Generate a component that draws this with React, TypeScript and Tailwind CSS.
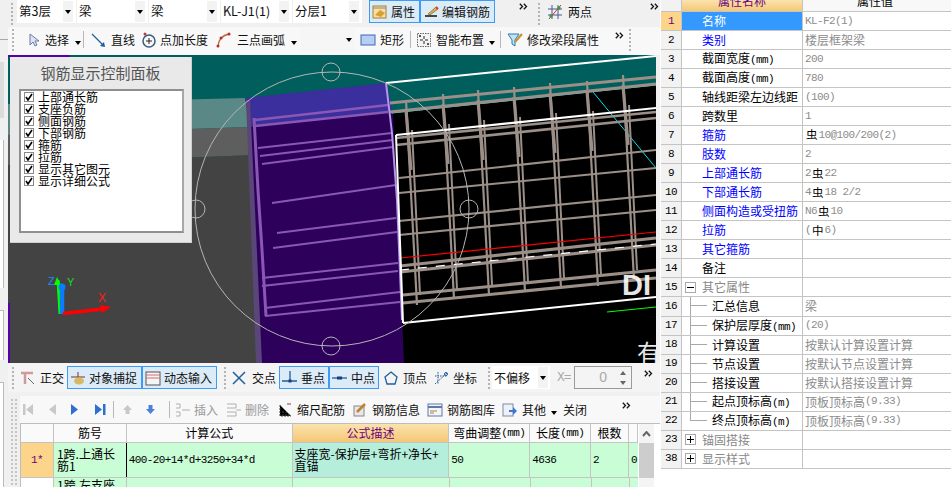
import React from "react";

const CJK = "font-['Noto_Sans_CJK_SC','Liberation_Sans',sans-serif]";
const MONO = "font-['Liberation_Mono','Noto_Sans_CJK_SC',monospace] text-[11px] tracking-[-0.6px]";

const Arrow = () => <span className="inline-block w-0 h-0 border-x-[3.5px] border-x-transparent border-t-[4px] border-t-black" />;
const More = () => (
  <svg width="9" height="7" viewBox="0 0 9 7" fill="none" className="block">
    <path d="M0.800 0.800 L3.500 3.500 L0.800 6.200 M4.800 0.800 L7.500 3.500 L4.800 6.200" stroke="#111" strokeWidth="1.300" />
  </svg>
);
const Grip = () => (
  <span className="flex flex-col gap-[2px] w-[3px] shrink-0">
    {[0, 1, 2, 3, 4, 5].map((i) => <span key={i} className="w-[2px] h-[2px] bg-[#b4b4b4]" />)}
  </span>
);
const Sep = () => <span className="w-px h-[17px] bg-[#b8b8b8] shrink-0" />;

function Ico({ children }: { children: React.ReactNode }) {
  return <svg width="16" height="16" viewBox="0 0 16 16" fill="none" className="shrink-0">{children}</svg>;
}

const Tool = ({ w, icon, label, gap = 4, gray = false, arrow = false }: { w: number; icon?: React.ReactNode; label?: string; gap?: number; gray?: boolean; arrow?: boolean }) => (
  <div className="flex items-center shrink-0 h-full" style={{ width: w, gap }}>
    {icon}
    {label && <span className={`whitespace-nowrap ${gray ? "text-[#999]" : "text-[#111]"}`}>{label}</span>}
    {arrow && <span className="ml-[1px]"><Arrow /></span>}
  </div>
);

const OnBtn = ({ w, icon, label }: { w: number; icon: React.ReactNode; label: string }) => (
  <div className="flex items-center gap-[3px] h-[23px] px-[2px] border border-[#3b9bf5] bg-[#dcebf8] shrink-0" style={{ width: w }}>
    {icon}
    <span className="whitespace-nowrap text-[#111]">{label}</span>
  </div>
);

const Drop = ({ w, label }: { w: number; label: string }) => (
  <div className="flex items-center justify-between h-[23px] bg-white pl-[2px] pr-[3px] shrink-0" style={{ width: w }}>
    <span className="whitespace-nowrap text-[#111] text-[12.5px]">{label}</span>
    <span className="w-[10px] h-[21px] bg-[#f3f3f3] flex items-center justify-center"><Arrow /></span>
  </div>
);

function Viewport() {
  const hLines: [number, number, number, number, number][] = [
    [390, 103, 656, 77, 3], [390, 112, 656, 84, 3], [396, 138, 656, 112, 2.600], [396, 145, 656, 118, 2.600],
    [399, 178, 656, 150, 2], [399, 193, 656, 168, 2], [399, 221, 656, 195, 2.200], [399, 235, 656, 210, 2.200],
    [400, 266, 656, 238, 3.200], [400, 272, 656, 245, 3.200], [403, 295, 656, 270, 3], [403, 303, 656, 278, 3],
  ];
  const tops = [[406, 100], [443, 94], [478, 90], [514, 87], [550, 83], [587, 81], [623, 75]];
  const purple: [number, number, number, number, number][] = [
    [255, 120, 388, 105, 2.500], [255, 126, 388, 112, 2.500], [258, 148, 392, 133, 2], [260, 156, 393, 140, 2], [262, 164, 393, 147, 1.800],
    [272, 203, 396, 185, 1.800], [277, 233, 396, 218, 1.800], [273, 248, 397, 232, 1.800], [262, 278, 398, 263, 2], [262, 286, 398, 271, 2],
    [265, 308, 400, 292, 2], [265, 316, 400, 302, 2],
  ];
  return (
    <svg width="648" height="308" viewBox="8 55 648 308" className="block">
      <rect x="8" y="55" width="648" height="308" fill="#005f5c" />
      <polygon points="8,104 245,98 250,127 8,135" fill="#5a8886" />
      <polygon points="8,135 250,127 254,155 8,165" fill="#5e5e5e" />
      <polygon points="8,165 254,155 262,363 8,363" fill="#434343" />
      <polygon points="392,113 656,85 656,363 392,363" fill="#000" />
      <polygon points="245,98 386,83 393,112 250,127" fill="#3b2e9d" />
      <polygon points="250,127 393,112 404,363 258,363" fill="#2d005c" />
      <polygon points="246,100 250,100 262,363 256,363" fill="#5a4678" />
      <rect x="8" y="55" width="62" height="2" fill="#5500aa" />
      <rect x="8" y="303" width="2" height="60" fill="#5500aa" />
      {purple.map((l, i) => <line key={i} x1={l[0]} y1={l[1]} x2={l[2]} y2={l[3]} stroke="#8a58b4" strokeWidth={l[4]} />)}
      <polyline points="254,118 258,190 262,250 266,316" stroke="#8a58b4" strokeWidth="3" fill="none" />
      <polyline points="386,83 392,133 397,200 402,320" stroke="#b596ea" strokeWidth="2" fill="none" />
      <line x1="392" y1="113" x2="656" y2="85" stroke="#00e5ee" strokeWidth="1" />
      <line x1="593" y1="92" x2="656" y2="168" stroke="#00e5ee" strokeWidth="1" />
      {tops.map(([x, y], i) => (
        <g key={i} stroke="#9b8f88" fill="none">
          <line x1={x} y1={y} x2={x + 11} y2={y + 205} strokeWidth="2.200" />
          <line x1={x + 6} y1={y + 30} x2={x + 14} y2={y + 195} strokeWidth="2" />
          <line x1={x} y1={y + 10} x2={x + 5} y2={y + 70} strokeWidth="3.200" />
        </g>
      ))}
      {hLines.map((l, i) => <line key={i} x1={l[0]} y1={l[1]} x2={l[2]} y2={l[3]} stroke="#9b8f88" strokeWidth={l[4]} />)}
      <line x1="400" y1="258" x2="656" y2="232" stroke="#ff0000" strokeWidth="1.200" />
      <line x1="400" y1="270" x2="656" y2="244" stroke="#fff" strokeWidth="1.200" strokeDasharray="9 9" />
      <line x1="607" y1="312" x2="656" y2="307" stroke="#00ff00" strokeWidth="1.200" />
      <line x1="386" y1="83" x2="656" y2="56" stroke="#fff" strokeWidth="2" />
      <line x1="396" y1="135" x2="656" y2="108" stroke="#fff" strokeWidth="2.200" />
      <line x1="396" y1="135" x2="403" y2="323" stroke="#fff" strokeWidth="2" />
      <line x1="403" y1="323" x2="656" y2="297" stroke="#fff" strokeWidth="2" />
      <g stroke="#b5b5b5" fill="none" strokeWidth="1">
        <circle cx="332" cy="209" r="137" />
        <circle cx="331" cy="72" r="9" />
        <circle cx="196" cy="209" r="9" />
        <circle cx="331" cy="346" r="9" />
        <circle cx="469" cy="209" r="9" />
      </g>
      <text x="622" y="295" fill="#fff" fontSize="29" fontWeight="700" fontFamily="Liberation Sans" opacity="0.9">DI</text>
      <text x="637" y="362" fill="#fff" fontSize="24" fontFamily="Noto Sans CJK SC" opacity="0.9">有</text>
      <line x1="60" y1="314" x2="58" y2="280" stroke="#00ff00" strokeWidth="3" />
      <polygon points="57,277 54,285 61,285" fill="#00ff00" />
      <line x1="62" y1="314" x2="62" y2="288" stroke="#0a7cff" strokeWidth="4.500" />
      <circle cx="62" cy="287" r="3.500" fill="#0a7cff" />
      <line x1="63" y1="313.500" x2="103" y2="309" stroke="#ff0000" strokeWidth="3.500" />
      <polygon points="100,305 111,307 102,313" fill="#ff0000" />
      <text x="48" y="285" fill="#1e88ff" fontSize="11" fontFamily="Liberation Sans">Z</text>
      <text x="67" y="286" fill="#1fdc1f" fontSize="11" fontFamily="Liberation Sans">Y</text>
      <text x="98" y="302" fill="#ff1a1a" fontSize="12" fontFamily="Liberation Sans">X</text>
    </svg>
  );
}

const panelItems = ["上部通长筋", "支座负筋", "侧面钢筋", "下部钢筋", "箍筋", "拉筋", "显示其它图元", "显示详细公式"];

const ControlPanel = () => (
  <div className="absolute left-[2px] top-[2px] w-[182px] h-[186px] bg-[#e9e9e9] border-r border-b border-[#cfcfcf] px-[9px] flex flex-col">
    <div className="h-[32px] flex items-center justify-center text-[15px] text-[#555] shrink-0">钢筋显示控制面板</div>
    <div className="w-[165px] h-[144px] bg-white border-2 border-[#8f8f8f] border-r-[#a8a8a8] pl-[3px]">
      {panelItems.map((t) => (
        <div key={t} className="flex items-center gap-[4px] h-[12px] text-[12px] leading-[12px] text-black whitespace-nowrap">
          <span className="w-[10px] h-[10px] border border-[#8a8a8a] bg-white flex items-center justify-center shrink-0">
            <svg width="8" height="8" viewBox="0 0 8 8"><path d="M1 4 L3 7 L7 1" stroke="#000" strokeWidth="1.600" fill="none" /></svg>
          </span>
          <span>{t}</span>
        </div>
      ))}
    </div>
  </div>
);

type Row = { n: string; name: string; color?: string; value?: React.ReactNode; kind?: "child" | "last" | "open" | "closed"; sel?: boolean };

const Lat = ({ children }: { children: React.ReactNode }) => <span className={MONO}>{children}</span>;
const Bar = ({ c = "虫" }: { c?: string }) => <span className="text-black text-[11.5px] mx-[1px]">{c}</span>;

const rows: Row[] = [
  { n: "1", name: "名称", sel: true, value: <Lat>KL-F2(1)</Lat> },
  { n: "2", name: "类别", color: "text-[#0000ff]", value: "楼层框架梁" },
  { n: "3", name: "截面宽度(mm)", value: <Lat>200</Lat> },
  { n: "4", name: "截面高度(mm)", value: <Lat>780</Lat> },
  { n: "5", name: "轴线距梁左边线距", value: <Lat>(100)</Lat> },
  { n: "6", name: "跨数里", value: <Lat>1</Lat> },
  { n: "7", name: "箍筋", color: "text-[#0000ff]", value: <><Bar /><Lat>10@100/200(2)</Lat></> },
  { n: "8", name: "肢数", color: "text-[#0000ff]", value: <Lat>2</Lat> },
  { n: "9", name: "上部通长筋", color: "text-[#0000ff]", value: <><Lat>2</Lat><Bar /><Lat>22</Lat></> },
  { n: "10", name: "下部通长筋", color: "text-[#0000ff]", value: <><Lat>4</Lat><Bar /><Lat>18 2/2</Lat></> },
  { n: "11", name: "侧面构造或受扭筋", color: "text-[#0000ff]", value: <><Lat>N6</Lat><Bar /><Lat>10</Lat></> },
  { n: "12", name: "拉筋", color: "text-[#0000ff]", value: <><Lat>(</Lat><Bar c="中" /><Lat>6)</Lat></> },
  { n: "13", name: "其它箍筋", color: "text-[#0000ff]" },
  { n: "14", name: "备注" },
  { n: "15", name: "其它属性", kind: "open" },
  { n: "16", name: "汇总信息", kind: "child", value: "梁" },
  { n: "17", name: "保护层厚度(mm)", kind: "child", value: <Lat>(20)</Lat> },
  { n: "18", name: "计算设置", kind: "child", value: "按默认计算设置计算" },
  { n: "19", name: "节点设置", kind: "child", value: "按默认节点设置计算" },
  { n: "20", name: "搭接设置", kind: "child", value: "按默认搭接设置计算" },
  { n: "21", name: "起点顶标高(m)", kind: "child", value: <>顶板顶标高<Lat>(9.33)</Lat></> },
  { n: "22", name: "终点顶标高(m)", kind: "last", value: <>顶板顶标高<Lat>(9.33)</Lat></> },
  { n: "23", name: "锚固搭接", kind: "closed" },
  { n: "38", name: "显示样式", kind: "closed" },
];

const NameText = ({ t }: { t: string }) => {
  const m = t.match(/^(.*)\((mm|m)\)$/);
  if (!m) return <>{t}</>;
  return <>{m[1]}<Lat>({m[2]})</Lat></>;
};

const Expander = ({ sign }: { sign: "+" | "-" }) => (
  <span className="w-[11px] h-[11px] border border-[#a8a8a8] bg-white flex items-center justify-center ml-[3px] mr-[6px] shrink-0">
    <span className="relative w-[7px] h-px bg-black">
      {sign === "+" && <span className="absolute left-[3px] top-[-3px] w-px h-[7px] bg-black" />}
    </span>
  </span>
);

const PropRow = ({ r }: { r: Row }) => {
  const child = r.kind === "child" || r.kind === "last";
  return (
    <div className="flex h-[19.040px] border-b border-[#c4c4c4] text-[12px] leading-none shrink-0">
      <div className={`w-[21px] shrink-0 border-r border-[#c4c4c4] flex items-center justify-center ${MONO} ${r.sel ? "bg-[#fdd58a] text-[#6a0080]" : "bg-[#f2f2f2] text-black"}`}>{r.n}</div>
      <div className={`w-[121px] shrink-0 border-r border-[#c4c4c4] flex items-center whitespace-nowrap ${r.sel ? "bg-[#3399ff] text-white" : r.color ?? "text-black"} ${r.kind === "open" || r.kind === "closed" ? "" : child ? "pl-[8px]" : "pl-[20px]"}`}>
        {r.kind === "open" && <Expander sign="-" />}
        {r.kind === "closed" && <Expander sign="+" />}
        {child && (
          <span className="w-[22px] shrink-0 flex flex-col self-stretch">
            <span className="h-1/2 w-[17px] border-l border-b border-[#a8a8a8]" />
            <span className={`h-1/2 w-[17px] ${r.kind === "child" ? "border-l border-[#a8a8a8]" : ""}`} />
          </span>
        )}
        <span className={r.kind === "open" || r.kind === "closed" ? "text-[#888]" : ""}><NameText t={r.name} /></span>
      </div>
      <div className="flex-1 flex items-center pl-[2px] text-[#8c8c8c] whitespace-nowrap">{r.value}</div>
    </div>
  );
};

const RightPanel = () => (
  <div className="w-[291px] shrink-0 h-full bg-white flex flex-col pl-[1px]">
    <div className="flex h-[12px] overflow-hidden border-b border-[#c4c4c4] text-[12px] shrink-0">
      <div className="w-[21px] bg-[#f2f2f2] border-r border-[#c4c4c4]" />
      <div className="w-[121px] bg-gradient-to-b from-[#fbe3ad] to-[#f5c776] border-r border-[#c4c4c4] overflow-hidden">
        <div className="h-[18px] -mt-[8px] flex items-center justify-center text-[#6a0080]">属性名称</div>
      </div>
      <div className="flex-1 bg-[#f8f8f8] overflow-hidden">
        <div className="h-[18px] -mt-[8px] flex items-center justify-center text-black pr-[4px]">属性值</div>
      </div>
    </div>
    {rows.map((r) => <PropRow key={r.n} r={r} />)}
  </div>
);

const cols = [
  { t: "筋号", w: 73 }, { t: "计算公式", w: 166 }, { t: "公式描述", w: 157, hi: true },
  { t: "弯曲调整(mm)", w: 81 }, { t: "长度(mm)", w: 61 }, { t: "根数", w: 38 }, { t: "", w: 9 },
];

const BarTable = () => (
  <div className="flex-1 flex bg-white border-t border-[#bdbdbd] border-l text-[12px] leading-[12px] overflow-hidden">
    <div className="w-[617px] shrink-0 flex flex-col">
      <div className="flex h-[19px] shrink-0 border-b border-[#c4c4c4]">
        <div className="w-[33px] border-r border-[#c4c4c4] bg-[#fafafa]" />
        {cols.map((c, i) => (
          <div key={i} className={`flex items-center justify-center border-r border-[#c4c4c4] whitespace-nowrap ${c.hi ? "bg-gradient-to-b from-[#fbe3ad] to-[#f5c776] text-[#6a0080]" : "bg-[#fafafa] text-black"}`} style={{ width: c.w }}>
            <NameText t={c.t} />
          </div>
        ))}
      </div>
      <div className="flex h-[35px] shrink-0 border-b border-[#c4c4c4] bg-[#c8fdd6] text-black">
        <div className={`w-[33px] bg-[#fdd58a] border-r border-[#c4c4c4] flex items-center justify-center text-[#6a0080] ${MONO}`}>1*</div>
        <div className="w-[73px] border-r border-black px-[3px] pt-[5px]">1跨.上通长筋1</div>
        <div className={`w-[166px] border-r border-[#c4c4c4] flex items-center pl-[2px] ${MONO}`}>400-20+14*d+3250+34*d</div>
        <div className="w-[157px] border-r border-[#c4c4c4] bg-[#b5efdc] pl-[2px] pt-[5px] whitespace-nowrap">支座宽-保护层+弯折+净长+<br />直锚</div>
        <div className={`w-[81px] border-r border-[#c4c4c4] flex items-center pl-[2px] ${MONO}`}>50</div>
        <div className={`w-[61px] border-r border-[#c4c4c4] flex items-center pl-[2px] ${MONO}`}>4636</div>
        <div className={`w-[38px] border-r border-[#c4c4c4] flex items-center pl-[2px] ${MONO}`}>2</div>
        <div className={`w-[9px] flex items-center pl-[2px] ${MONO}`}>0</div>
      </div>
      <div className="flex h-[20px] shrink-0 bg-[#c8fdd6] text-black">
        <div className="w-[33px] bg-white border-r border-[#c4c4c4]" />
        <div className="w-[73px] border-r border-[#c4c4c4] px-[3px] pt-[1px] whitespace-nowrap overflow-hidden">1跨.左支座</div>
        <div className="w-[166px] border-r border-[#c4c4c4]" />
        <div className="w-[157px] border-r border-[#c4c4c4]" />
        <div className="w-[81px] border-r border-[#c4c4c4]" />
        <div className="w-[61px] border-r border-[#c4c4c4]" />
        <div className="w-[38px] border-r border-[#c4c4c4]" />
      </div>
    </div>
    <div className="w-[15px] shrink-0 bg-[#f4f4f4] flex flex-col ml-[1px]">
      <div className="h-[19px] flex items-center justify-center">
        <svg width="9" height="6" viewBox="0 0 9 6"><path d="M1 5 L4.500 1 L8 5" stroke="#666" strokeWidth="2" fill="none" /></svg>
      </div>
      <div className="h-[35px] bg-[#cdcdcd]" />
    </div>
  </div>
);

export default function App() {
  return (
    <div className={`w-[951px] h-[487px] overflow-hidden flex bg-[#f0f0f0] text-[12px] ${CJK}`}>
      <div className="w-[8px] shrink-0 flex flex-col pt-[39px] gap-[22px]">
        <div className="h-[1px] bg-[#a8a8a8]" />
        <div className="h-[56px] w-[4px] bg-[#dcdcdc]" />
        <div className="h-[148px] w-[4px] bg-white border-r border-[#bbb]" />
        <div className="h-[50px] w-[4px] bg-white border-r border-t border-[#bbb]" />
        <div className="flex-1 w-[4px] bg-white border-r border-t border-[#bbb]" />
      </div>

      <div className="w-[652px] shrink-0 flex flex-col">
        <div className="h-[27px] flex items-start shrink-0">
          <div className="w-[9px] flex justify-center pt-[3px]"><Grip /></div>
          <div className="flex gap-[1px] items-center">
            <Drop w={59} label="第3层" />
            <Drop w={71} label="梁" />
            <Drop w={71} label="梁" />
            <Drop w={71} label="KL-J1(1)" />
            <Drop w={69} label="分层1" />
          </div>
          <div className="ml-[4px] pt-[3px]"><Sep /></div>
          <div className="ml-[3px]">
            <OnBtn w={51} label="属性" icon={<Ico><rect x="1" y="2" width="13" height="12" fill="#f9dfa0" stroke="#a08040" /><path d="M3 11 L8 6 L13 9 L9 13 Z" fill="#d8a030" /><path d="M1 4 H14" stroke="#888" /></Ico>} />
          </div>
          <OnBtn w={75} label="编辑钢筋" icon={<Ico><path d="M2 12 H14" stroke="#111" strokeWidth="1.500" /><path d="M5 10 L13 3 L15 5 L7 11 Z" fill="#d8b050" stroke="#705010" strokeWidth="0.600" /><path d="M13 3 L15 5" stroke="#d04040" strokeWidth="2" /></Ico>} />
          <div className="w-[33px] flex justify-end pt-[3px] shrink-0"><More /></div>
          <div className="ml-[10px] pt-[3px]"><Grip /></div>
          <div className="ml-[6px] h-[23px]">
            <Tool w={103} gap={5} label="两点" icon={<Ico><path d="M5 1 V15 M11 1 V15 M1 5 H15 M1 11 H15" stroke="#4a5a90" /><path d="M2 15 L14 1" stroke="#d03030" /><circle cx="4" cy="12" r="1.700" fill="#3c9a3c" /><circle cx="12" cy="4" r="1.700" fill="#3c9a3c" /></Ico>} />
          </div>
          <div className="pt-[3px]"><More /></div>
        </div>

        <div className="h-[28px] pb-[3px] flex items-center shrink-0 bg-[#f8f8f8] rounded-t-[3px]">
          <div className="w-[18px] pl-[4px]"><Grip /></div>
          <Tool w={57} gap={5} label="选择" arrow icon={<svg width="12" height="14" viewBox="0 0 12 14" className="shrink-0 ml-[2px]"><path d="M2 1 V12 L5 9 L7 13 L9 12 L7 8 H11 Z" fill="#dfe4f5" stroke="#6b7aa8" /></svg>} />
          <Sep />
          <div className="ml-[7px] h-full"><Tool w={50} gap={4} label="直线" icon={<Ico><path d="M1 2 L13 14" stroke="#1f5f9f" strokeWidth="1.300" /><path d="M14 15 L9 14 L13 10 Z" fill="#1f5f9f" /></Ico>} /></div>
          <Tool w={75} gap={3} label="点加长度" icon={<Ico><circle cx="8" cy="9" r="6" stroke="#3a5a80" strokeWidth="1.500" /><path d="M5 9 H11 M8 6 V12" stroke="#222" /><circle cx="4" cy="2" r="1.500" fill="#b04040" /></Ico>} />
          <Tool w={84} gap={5} label="三点画弧" arrow icon={<Ico><path d="M2 14 Q3 4 13 2" stroke="#c06030" strokeWidth="1.300" /><circle cx="2" cy="14" r="1.500" fill="#b03030" /><circle cx="5" cy="6" r="1.500" fill="#b03030" /><circle cx="13" cy="2" r="1.500" fill="#b03030" /></Ico>} />
          <div className="w-[55px] h-[24px] bg-[#f6f6f6] flex items-center justify-end pr-[3px]"><Arrow /></div>
          <div className="ml-[5px] h-full"><Tool w={50} gap={4} label="矩形" icon={<Ico><rect x="1" y="3" width="14" height="10" fill="#b7cdf2" stroke="#3e68b8" /></Ico>} /></div>
          <Sep />
          <div className="ml-[5px] h-full"><Tool w={84} gap={4} label="智能布置" arrow icon={<Ico><rect x="1.500" y="1.500" width="13" height="13" fill="#f4f4f4" stroke="#666" strokeDasharray="1.500 1" /><path d="M8 4 V7 M8 9 V12 M4 8 H7 M9 8 H12" stroke="#222" /><circle cx="4" cy="4" r="1" fill="#222" /><circle cx="12" cy="12" r="1" fill="#222" /></Ico>} /></div>
          <Sep />
          <div className="ml-[6px] h-full"><Tool w={108} gap={4} label="修改梁段属性" icon={<Ico><path d="M1 2 H12 L8 8 V14 L5 12 V8 Z" fill="#bfe4f5" stroke="#2a7ab0" /><path d="M8 10 L15 2" stroke="#c89030" strokeWidth="2" /></Ico>} /></div>
          <div className="pb-[8px]"><More /></div>
          <div className="ml-[5px]"><Grip /></div>
        </div>

        <div className="relative h-[308px] shrink-0 overflow-hidden">
          <Viewport />
          <ControlPanel />
        </div>

        <div className="h-[29px] flex items-center shrink-0 bg-[#f4f4f4]">
          <div className="w-[12px] pl-[4px]"><Grip /></div>
          <Tool w={47} gap={4} label="正交" icon={<Ico><path d="M1 3 H13 M5 3 V14" stroke="#d09a9a" strokeWidth="2.500" /><path d="M8 8 L14 14" stroke="#667" /></Ico>} />
          <OnBtn w={75} label="对象捕捉" icon={<Ico><path d="M1 7 H15 M8 2 V7" stroke="#803020" /><ellipse cx="9" cy="11" rx="5" ry="3.500" fill="#d8b860" /></Ico>} />
          <OnBtn w={75} label="动态输入" icon={<Ico><rect x="1" y="2" width="14" height="13" fill="#f5f5f5" stroke="#555" /><path d="M1 5 H15 M1 8 H15" stroke="#d07070" /></Ico>} />
          <div className="ml-[7px] w-[7px]"><Grip /></div>
          <Tool w={48} gap={5} label="交点" icon={<Ico><path d="M2 2 L14 14 M14 2 L2 14" stroke="#1f5f9f" strokeWidth="1.500" /></Ico>} />
          <OnBtn w={50} label="垂点" icon={<Ico><path d="M0 11 H15 M8 1 V11" stroke="#1f5f9f" strokeWidth="1.300" /><rect x="6.500" y="9.500" width="3" height="3" fill="#143f80" /></Ico>} />
          <OnBtn w={50} label="中点" icon={<Ico><path d="M0 8 H15" stroke="#1f5f9f" strokeWidth="1.300" /><rect x="5" y="6.500" width="5" height="3" fill="#143f80" /></Ico>} />
          <div className="ml-[4px] h-full"><Tool w={50} gap={4} label="顶点" icon={<Ico><path d="M8 2 L14 7 L12 14 H4 L2 7 Z" stroke="#1f5f9f" strokeWidth="1.300" /></Ico>} /></div>
          <Tool w={50} gap={4} label="坐标" icon={<Ico><path d="M2 14 L14 3 M2 6 H14 M5 2 V14" stroke="#2a5a9a" strokeDasharray="1.500 1" /><circle cx="13" cy="4" r="1.500" stroke="#1f5f9f" /></Ico>} />
          <div className="ml-[5px] w-[4px]"><Grip /></div>
          <div className="flex items-center justify-between h-[23px] w-[58px] bg-white pl-[2px] pr-[2px]">
            <span className="text-[12px] text-[#111]">不偏移</span>
            <span className="w-[10px] h-[21px] bg-[#f3f3f3] flex items-center justify-center"><Arrow /></span>
          </div>
          <div className="ml-[5px]"><Sep /></div>
          <span className="font-['Liberation_Mono',monospace] ml-[2px] text-[13px] text-[#aaa] w-[17px] tracking-[-1px]">X=</span>
          <div className="w-[58px] h-[23px] border border-[#9a9a9a] bg-[#f4f4f4] flex items-center justify-end">
            <span className="text-[14px] text-[#aaa] font-['Liberation_Sans',sans-serif] mr-[8px]">0</span>
            <span className="flex flex-col gap-[6px] items-center w-[16px]">
              <span className="w-0 h-0 border-x-[3.5px] border-x-transparent border-b-[4px] border-b-[#666]" />
              <span className="w-0 h-0 border-x-[3.5px] border-x-transparent border-t-[4px] border-t-[#666]" />
            </span>
          </div>
          <div className="ml-[12px] pb-[8px]"><More /></div>
        </div>

        <div className="flex-1 flex min-h-0">
          <div className="w-[12px] shrink-0 flex flex-col items-center pt-[5px] gap-[2px] overflow-hidden">
            <svg width="10" height="10" viewBox="0 0 10 10"><rect x="0.500" y="0.500" width="9" height="9" fill="#f2dede" stroke="#666" /><path d="M1 1 L9 9 M9 1 L1 9" stroke="#b04040" strokeWidth="1.200" /></svg>
            <div className="grid grid-cols-2 gap-[2px]">
              {Array.from({ length: 48 }).map((_, i) => <span key={i} className="w-[2px] h-[2px] bg-[#c4c4c4]" />)}
            </div>
          </div>
          <div className="flex-1 min-w-0 flex flex-col pt-[4px]">
            <div className="h-[27px] flex items-center shrink-0 bg-[#f8f8f8]">
              <div className="ml-[3px] flex items-center h-full">
                <Tool w={25} icon={<svg width="11" height="13" viewBox="0 0 11 13"><rect x="0" y="1" width="2.500" height="11" fill="#c8c8c8" /><path d="M10 1 V12 L3 6.500 Z" fill="#c8c8c8" /></svg>} />
                <Tool w={23} icon={<svg width="8" height="13" viewBox="0 0 8 13"><path d="M8 1 V12 L1 6.500 Z" fill="#c8c8c8" /></svg>} />
                <Tool w={24} icon={<svg width="8" height="13" viewBox="0 0 8 13"><path d="M0 1 V12 L7 6.500 Z" fill="#2f6fd0" /></svg>} />
                <Tool w={18} icon={<svg width="11" height="13" viewBox="0 0 11 13"><path d="M0 1 V12 L7 6.500 Z" fill="#2f6fd0" /><rect x="8" y="1" width="2.500" height="11" fill="#2f6fd0" /></svg>} />
                <Sep />
                <div className="ml-[8px] h-full"><Tool w={23} icon={<svg width="11" height="11" viewBox="0 0 11 11"><path d="M5.500 1 L10 6 H7.500 V10 H3.500 V6 H1 Z" fill="#c8c8c8" /></svg>} /></div>
                <Tool w={24} icon={<svg width="11" height="11" viewBox="0 0 11 11"><path d="M5.500 10 L10 5 H7.500 V1 H3.500 V5 H1 Z" fill="#4a80d8" /></svg>} />
                <Sep />
                <div className="ml-[5px] h-full"><Tool w={51} gap={3} gray label="插入" icon={<Ico><path d="M1 2 H5 V6 H1 M1 10 H5 V14 H1 M7 8 H15" stroke="#b0b0b0" /></Ico>} /></div>
                <Tool w={53} gap={3} gray label="删除" icon={<Ico><path d="M1 2 H10 V6 H1 M1 10 H10 V14 H1 M10 8 H15" stroke="#b0b0b0" /></Ico>} />
                <Tool w={73} gap={5} label="缩尺配筋" icon={<svg width="13" height="14" viewBox="0 0 13 14"><path d="M1 2 V13 H12 M4 13 V7 M7 13 V9 M10 13 V11" stroke="#444" strokeDasharray="2 1" /><path d="M8 1 H12" stroke="#b03030" /></svg>} />
                <Tool w={75} gap={4} label="钢筋信息" icon={<Ico><rect x="2" y="4" width="10" height="10" fill="#e8e8e8" stroke="#888" /><path d="M5 10 L13 2" stroke="#c08030" strokeWidth="2.500" /></Ico>} />
                <Tool w={75} gap={4} label="钢筋图库" icon={<Ico><rect x="1" y="2" width="14" height="12" fill="#f4f4f4" stroke="#5a7ab0" /><path d="M1 5 H15" stroke="#5a7ab0" strokeWidth="2" /><path d="M3 9 H10 M3 11 H7" stroke="#b08050" /></Ico>} />
                <Tool w={61} gap={4} label="其他" arrow icon={<Ico><rect x="1" y="2" width="10" height="12" fill="#eef2f8" stroke="#7a8aa0" /><path d="M7 8 H11 V5 L15 9 L11 13 V10 H7 Z" fill="#3a78d8" /></Ico>} />
                <Tool w={60} label="关闭" />
              </div>
              <div className="pb-[8px] ml-[-1px]"><More /></div>
            </div>
            <BarTable />
          </div>
        </div>
      </div>

      <RightPanel />
    </div>
  );
}
